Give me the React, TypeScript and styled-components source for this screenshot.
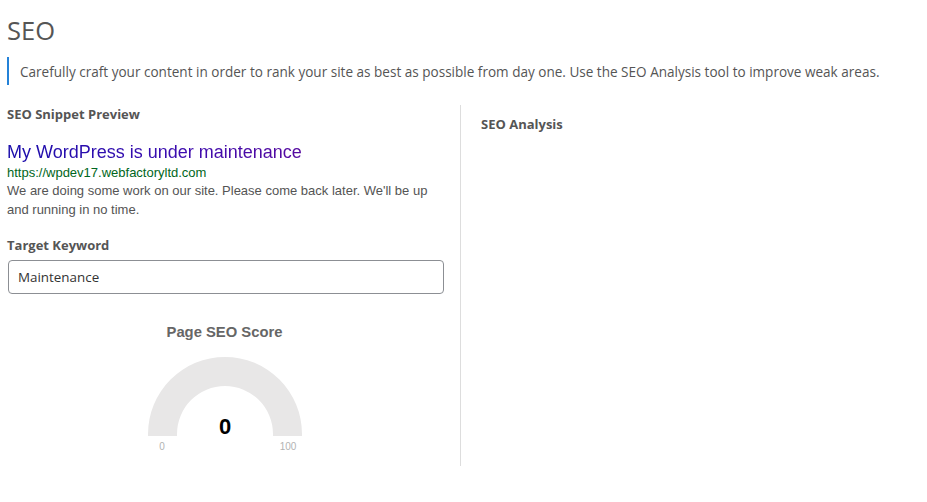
import React from "react";
import styled, { createGlobalStyle } from "styled-components";

const GlobalStyle = createGlobalStyle`
  html, body {
    margin: 0;
    padding: 0;
    background: #ffffff;
  }
  body {
    font-family: "Open Sans", "Noto Sans", sans-serif;
    color: #555555;
  }
`;

const Page = styled.div`
  padding: 14px 7px 0 7px;
  width: 927px;
  box-sizing: border-box;
`;

const Title = styled.h1`
  margin: 0;
  font-size: 25.5px;
  font-weight: 400;
  line-height: 32px;
  color: #555555;
`;

const Intro = styled.p`
  margin: 11px 0 0 0;
  padding: 6px 0 4px 11px;
  border-left: 2px solid #2482d8;
  font-size: 13.55px;
  line-height: 18px;
  color: #555555;
`;

const Columns = styled.div`
  display: grid;
  grid-template-columns: 454px 1fr;
  margin-top: 20px;
`;

const LeftCol = styled.div`
  padding-right: 17px;
  padding-bottom: 10px;
  border-right: 1px solid #dddddd;
`;

const RightCol = styled.div`
  padding: 10px 0 0 20px;
`;

const Label = styled.div`
  font-size: 13px;
  font-weight: 700;
  line-height: 18px;
  color: #555555;
`;

const Snippet = styled.div`
  margin-top: 17px;
  font-family: "Liberation Sans", Arial, sans-serif;
`;

const SnippetTitle = styled.div`
  font-size: 18px;
  line-height: 24px;
  color: #1a0dab;
  background: linear-gradient(90deg, #1a0dab 0%, #3a0cb0 55%, #560aa0 100%);
  -webkit-background-clip: text;
  background-clip: text;
  -webkit-text-fill-color: transparent;
  display: inline-block;
`;

const SnippetUrl = styled.div`
  font-size: 13px;
  line-height: 17px;
  color: #006621;
`;

const SnippetDesc = styled.div`
  font-size: 13px;
  line-height: 19px;
  color: #545454;
`;

const Field = styled.div`
  margin-top: 17px;
`;

const Input = styled.input`
  display: block;
  width: 436px;
  height: 34px;
  margin: 6px 0 0 1px;
  padding: 0 9px;
  box-sizing: border-box;
  border: 1px solid #8c8f94;
  border-radius: 4px;
  font-family: "Open Sans", "Noto Sans", sans-serif;
  font-size: 13.4px;
  color: #333333;
  background: #ffffff;
  outline: none;
`;

const ScoreBox = styled.div`
  display: flex;
  flex-direction: column;
  align-items: center;
  margin-top: 29px;
  width: 435px;
  font-family: "Liberation Sans", Arial, sans-serif;
`;

const ScoreTitle = styled.div`
  font-size: 14.8px;
  font-weight: 700;
  color: #666666;
  line-height: 18px;
`;

const Gauge = styled.svg`
  display: block;
  margin-top: 15px;
`;

function ScoreGauge({ value }: { value: number }) {
  return (
    <Gauge width="170" height="100" viewBox="0 0 170 100">
      <path
        d="M8 78 A77 77 0 0 1 162 78 L162 80 L133 80 L133 78 A48 48 0 0 0 37 78 L37 80 L8 80 Z"
        fill="#e8e7e7"
      />
      <text
        x="85"
        y="78"
        textAnchor="middle"
        fontFamily="Liberation Sans, Arial, sans-serif"
        fontWeight="700"
        fontSize="22"
        fill="#000000"
      >
        {value}
      </text>
      <text x="22" y="94" textAnchor="middle" fontSize="10" fill="#b3b3b3" fontFamily="Liberation Sans, Arial, sans-serif">
        0
      </text>
      <text x="148" y="94" textAnchor="middle" fontSize="10" fill="#b3b3b3" fontFamily="Liberation Sans, Arial, sans-serif">
        100
      </text>
    </Gauge>
  );
}

export default function App() {
  return (
    <>
      <GlobalStyle />
      <Page>
        <Title>SEO</Title>
        <Intro>
          Carefully craft your content in order to rank your site as best as possible from day one. Use the SEO
          Analysis tool to improve weak areas.
        </Intro>
        <Columns>
          <LeftCol>
            <Label>SEO Snippet Preview</Label>
            <Snippet>
              <SnippetTitle>My WordPress is under maintenance</SnippetTitle>
              <SnippetUrl>https://wpdev17.webfactoryltd.com</SnippetUrl>
              <SnippetDesc>
                We are doing some work on our site. Please come back later. We'll be up and running in no time.
              </SnippetDesc>
            </Snippet>
            <Field>
              <Label>Target Keyword</Label>
              <Input defaultValue="Maintenance" />
            </Field>
            <ScoreBox>
              <ScoreTitle>Page SEO Score</ScoreTitle>
              <ScoreGauge value={0} />
            </ScoreBox>
          </LeftCol>
          <RightCol>
            <Label>SEO Analysis</Label>
          </RightCol>
        </Columns>
      </Page>
    </>
  );
}
